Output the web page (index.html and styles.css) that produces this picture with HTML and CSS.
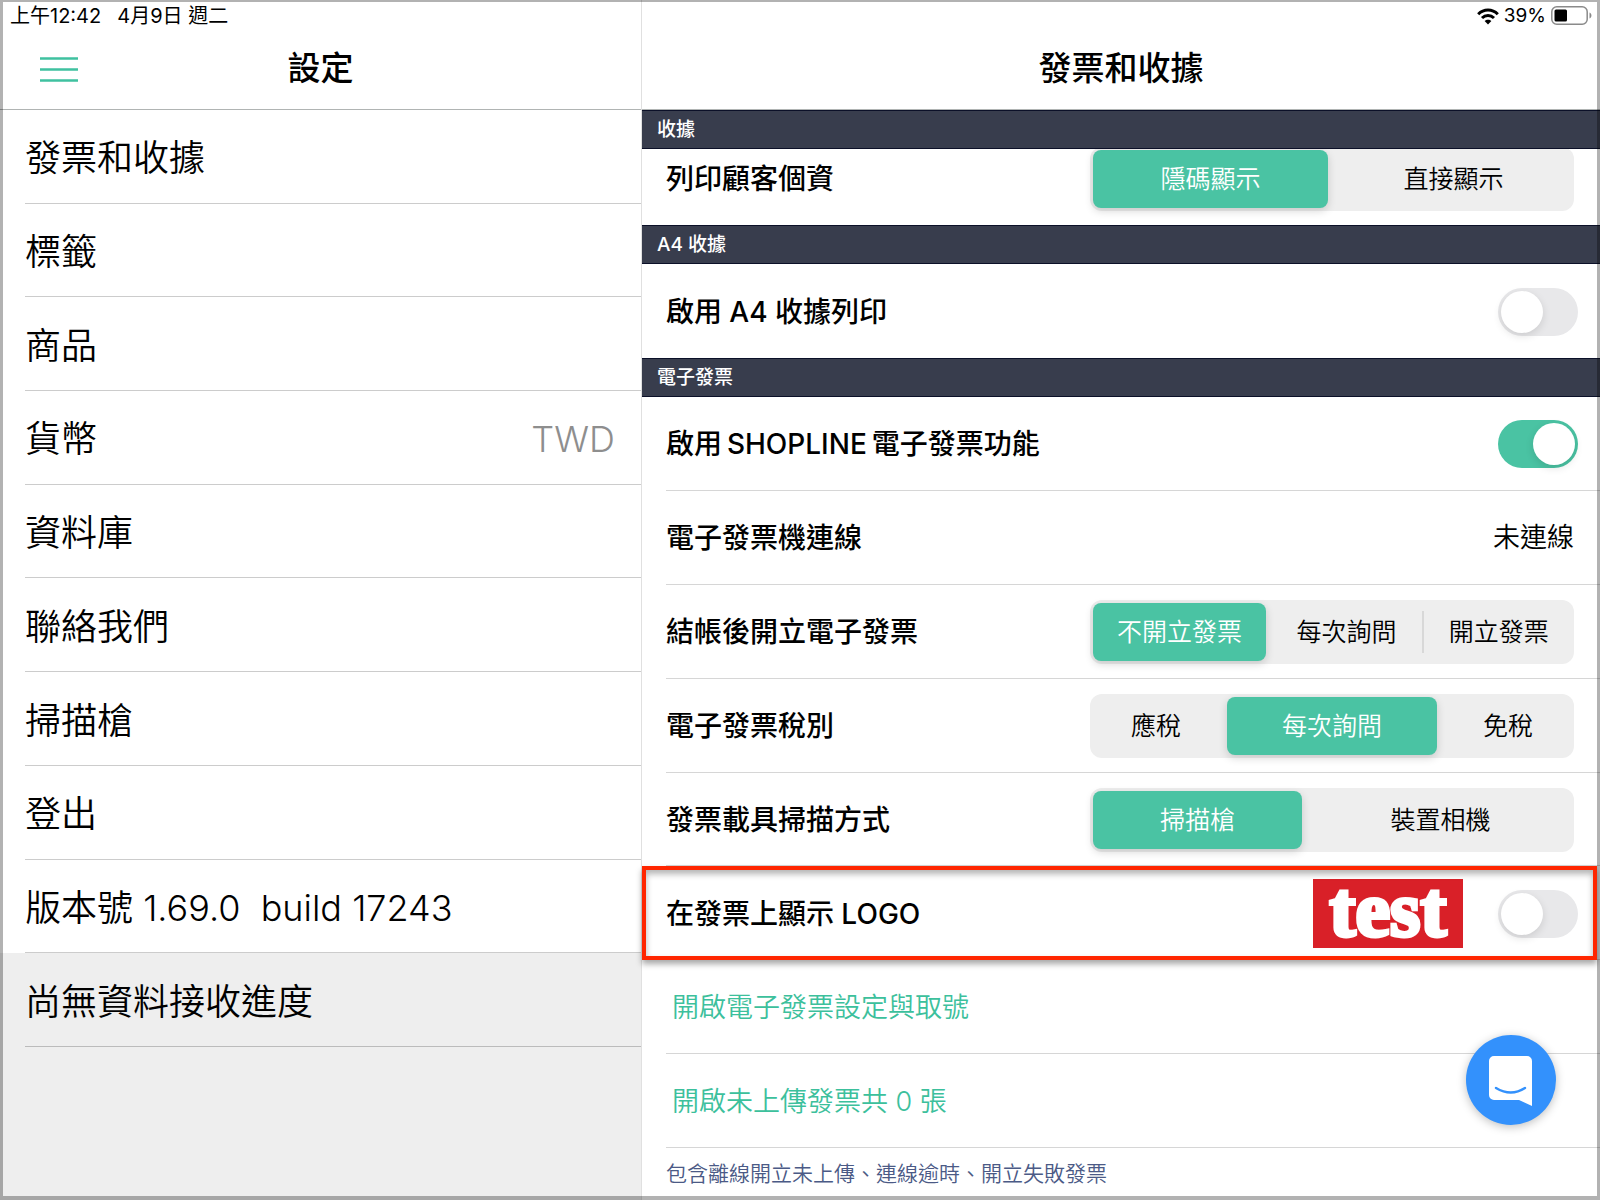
FILE: index.html
```html
<!DOCTYPE html>
<html lang="zh-Hant">
<head>
  <meta charset="UTF-8" />
  <meta name="viewport" content="width=device-width, initial-scale=1.0" />
  <title>設定 - 發票和收據</title>
  <link rel="stylesheet" href="styles.css">
</head>
<body>

  <div class="app">
    <nav class="sidebar">
      <header class="header">
        <div class="status">
          <span>上午12:42</span>
          <span>4月9日 週二</span>
        </div>
        <div class="title-bar">
          <button class="menu-btn" aria-label="選單">
            <svg width="38" height="26" viewBox="0 0 38 26"><path d="M0 1.5h38M0 12.5h38M0 23.5h38" stroke="#3fc1a0" stroke-width="2.6" /></svg>
          </button>
          <h1>設定</h1>
        </div>
      </header>

      <ul class="menu">
        <li><a href="#">發票和收據</a></li>
        <li><a href="#">標籤</a></li>
        <li><a href="#">商品</a></li>
        <li><a href="#">貨幣 <span class="currency">TWD</span></a></li>
        <li><a href="#">資料庫</a></li>
        <li><a href="#">聯絡我們</a></li>
        <li><a href="#">掃描槍</a></li>
        <li><a href="#">登出</a></li>
        <li><span class="version">版本號 1.69.0 &nbsp;build 17243</span></li>
        <li class="progress"><span>尚無資料接收進度</span></li>
      </ul>
    </nav>

    <main class="content">
      <header class="header">
        <div class="status status-right">
          <svg width="22" height="17" viewBox="0 0 22 17">
            <g fill="none" stroke="#000" stroke-width="3">
              <path d="M1.2 6.2C6.8 .6 15.2 .6 20.8 6.2" />
              <path d="M5 10C8.400 6.600 13.600 6.600 17 10" />
            </g>
            <path d="M11 16.500L7.600 13C9.500 11.200 12.500 11.200 14.400 13z" />
          </svg>
          <span>39%</span>
          <svg width="42" height="20" viewBox="0 0 42 20">
            <rect x=".8" y=".8" width="35.400" height="17.400" rx="5" fill="#fff" stroke="#8a8a8a" stroke-width="1.500" />
            <rect x="3.500" y="3.500" width="12.500" height="12" rx="1.500" />
            <path d="M38.500 6.500c2.600 1 2.600 5 0 6z" fill="#8a8a8a" />
          </svg>
        </div>
        <div class="title-bar">
          <h1>發票和收據</h1>
        </div>
      </header>

      <h2 class="section">收據</h2>
      <div class="row scrolled">
        <span class="label" id="customer">列印顧客個資</span>
        <div class="segmented seg-customer" role="radiogroup" aria-labelledby="customer">
          <label><input type="radio" name="customer" checked><span>隱碼顯示</span></label>
          <label><input type="radio" name="customer"><span>直接顯示</span></label>
        </div>
      </div>

      <h2 class="section">A4 收據</h2>
      <div class="row">
        <label class="label" for="a4">啟用 A4 收據列印</label>
        <input class="switch" type="checkbox" id="a4">
      </div>

      <h2 class="section">電子發票</h2>
      <div class="rows">
        <div class="row">
          <label class="label" for="einvoice">啟用<span class="brand">SHOPLINE</span>電子發票功能</label>
          <input class="switch" type="checkbox" id="einvoice" checked>
        </div>
        <div class="row">
          <span class="label">電子發票機連線</span>
          <span class="value">未連線</span>
        </div>
        <div class="row">
          <span class="label" id="checkout">結帳後開立電子發票</span>
          <div class="segmented seg-checkout" role="radiogroup" aria-labelledby="checkout">
            <label><input type="radio" name="checkout" checked><span>不開立發票</span></label>
            <label><input type="radio" name="checkout"><span>每次詢問</span></label>
            <label class="divided"><input type="radio" name="checkout"><span>開立發票</span></label>
          </div>
        </div>
        <div class="row">
          <span class="label" id="tax">電子發票稅別</span>
          <div class="segmented seg-tax" role="radiogroup" aria-labelledby="tax">
            <label><input type="radio" name="tax"><span>應稅</span></label>
            <label><input type="radio" name="tax" checked><span>每次詢問</span></label>
            <label><input type="radio" name="tax"><span>免稅</span></label>
          </div>
        </div>
        <div class="row">
          <span class="label" id="scan">發票載具掃描方式</span>
          <div class="segmented seg-scan" role="radiogroup" aria-labelledby="scan">
            <label><input type="radio" name="scan" checked><span>掃描槍</span></label>
            <label><input type="radio" name="scan"><span>裝置相機</span></label>
          </div>
        </div>
        <div class="row highlight">
          <label class="label" for="logo">在發票上顯示 LOGO</label>
          <span class="logo">test</span>
          <input class="switch" type="checkbox" id="logo">
        </div>
        <div class="row">
          <a class="link" href="#">開啟電子發票設定與取號</a>
        </div>
        <div class="row">
          <a class="link" href="#">開啟未上傳發票共 0 張</a>
        </div>
      </div>
      <p class="note">包含離線開立未上傳、連線逾時、開立失敗發票</p>
    </main>
  </div>

  <button class="chat" aria-label="聊天">
    <svg width="90" height="90" viewBox="0 0 90 90">
      <path d="M28 21h33a5 5 0 0 1 5 5v45l-13-6H28a5 5 0 0 1-5-5V26a5 5 0 0 1 5-5z" fill="#fff" />
      <path d="M30 53q15 9 29 0" fill="none" stroke="#3391fc" stroke-width="2.500" stroke-linecap="round" />
    </svg>
  </button>

</body>
</html>
```

FILE: styles.css
```css
* {
  box-sizing: border-box;
}

body {
  margin: 0;
  background: #fff;
  color: #000;
  font-family: Inter, "Noto Sans CJK TC", sans-serif;
}

/* window frame */
body::after {
  content: "";
  position: fixed;
  inset: 0;
  border: 3px solid rgba(0, 0, 0, 0.3);
  border-top-width: 2px;
  border-bottom-width: 4px;
  pointer-events: none;
  z-index: 10;
}

h1, h2, p, ul {
  margin: 0;
  padding: 0;
}

a {
  color: inherit;
  text-decoration: none;
}

.app {
  display: grid;
  grid-template-columns: 67fr 100fr;
  min-height: 100vh;
}

.sidebar, .content {
  display: flex;
  flex-direction: column;
  min-width: 0;
}

.sidebar {
  background: #eee;
  border-right: 1px solid #e0e0e0;
  padding-bottom: 153px;
}

/* header */
.header {
  height: 110px;
  background: #fff;
  border-bottom: 1px solid #b0b4b3;
}

.status {
  display: flex;
  align-items: center;
  gap: 16px;
  height: 30px;
  padding: 2px 7px 0 10px;
  font-size: 20px;
  line-height: 28px;
}

.status-right {
  justify-content: flex-end;
  gap: 5px;
  font-size: 19px;
}

.title-bar {
  position: relative;
  display: flex;
  align-items: center;
  justify-content: center;
  height: 76px;
}

.title-bar h1 {
  font-size: 33px;
  font-weight: 500;
  line-height: 44px;
}

.menu-btn {
  position: absolute;
  left: 40px;
  display: flex;
  padding: 4px 0 0;
  border: none;
  background: none;
}

/* left menu */
.menu {
  flex: 1;
  display: grid;
  grid-template-rows: repeat(10, 1fr);
  list-style: none;
  font-size: 36px;
  font-weight: 350;
  line-height: 48px;
}

.menu li {
  display: flex;
  padding-left: 25px;
  background: #fff;
}

.menu a, .menu li > span {
  flex: 1;
  display: flex;
  align-items: center;
  justify-content: space-between;
  padding: 4px 26px 0 0;
  border-bottom: 1px solid #ccc;
}

.menu .progress {
  background: #eee;
}

.menu .progress span {
  border-color: #bbb;
}

.currency {
  color: #8e8e8e;
}

/* right side */
.section {
  position: relative;
  z-index: 1;
  height: 39px;
  padding-left: 15px;
  background: #383d4d;
  border-top: 1px solid #0b1028;
  border-bottom: 1px solid #0b1028;
  color: #fff;
  font-size: 19px;
  font-weight: 500;
  line-height: 38px;
}

.row {
  position: relative;
  display: flex;
  align-items: center;
  min-height: 94px;
  padding: 2px 26px 0 24px;
}

.scrolled {
  margin-top: -18px;
}

.rows {
  flex: 1;
  display: grid;
  grid-template-rows: repeat(8, 1fr);
  padding-left: 24px;
}

.rows .row {
  min-height: 0;
  padding-left: 0;
  border-bottom: 1px solid #d6d6d6;
}

.label {
  flex: 1;
  font-size: 28px;
  font-weight: 500;
  line-height: 40px;
}

.brand {
  margin: 0 5px;
}

.value {
  font-size: 27px;
  font-weight: 350;
  line-height: 40px;
}

.link {
  padding-left: 6px;
  color: #3cc09c;
  font-size: 27px;
  font-weight: 350;
  line-height: 40px;
}

.note {
  height: 52px;
  padding-left: 24px;
  color: #4b5a86;
  font-size: 21px;
  font-weight: 350;
  line-height: 52px;
}

/* segmented control */
.segmented {
  display: grid;
  column-gap: 8px;
  width: 484px;
  height: 64px;
  padding: 3px;
  border-radius: 12px;
  background: #eee;
  font-size: 25px;
  font-weight: 350;
}

.seg-customer { grid-template-columns: 1fr 1fr; }
.seg-checkout { grid-template-columns: 6fr 5fr 5fr; }
.seg-tax { grid-template-columns: 3fr 5fr 3fr; }
.seg-scan { grid-template-columns: 4fr 5fr; }

.segmented label {
  position: relative;
  display: flex;
}

.segmented input {
  position: absolute;
  opacity: 0;
  margin: 0;
}

.segmented span {
  flex: 1;
  display: flex;
  align-items: center;
  justify-content: center;
  padding-bottom: 4px;
  border-radius: 8px;
}

.segmented input:checked + span {
  background: #4ac3a3;
  color: #fff;
  box-shadow: 0 3px 8px rgba(0, 0, 0, 0.16);
}

.divided::before {
  content: "";
  position: absolute;
  left: -5px;
  top: 8px;
  bottom: 8px;
  width: 2px;
  background: #d8d8d8;
}

/* on/off switch */
.switch {
  appearance: none;
  width: 80px;
  height: 48px;
  margin: 0 -4px 0 0;
  padding: 3px;
  border-radius: 24px;
  background: #e8e8ea;
}

.switch::before {
  content: "";
  display: block;
  width: 42px;
  height: 42px;
  border-radius: 50%;
  background: #fff;
  box-shadow: 0 3px 8px rgba(0, 0, 0, 0.12);
}

.switch:checked {
  background: #4ac3a3;
}

.switch:checked::before {
  margin-left: auto;
}

/* highlighted row */
.highlight::after {
  content: "";
  position: absolute;
  inset: 0 3px -1px -24px;
  border: 4px solid #ff2600;
  box-shadow: 0 4px 6px rgba(0, 0, 0, 0.35), inset 0 4px 6px rgba(0, 0, 0, 0.3);
  pointer-events: none;
}

.logo {
  width: 150px;
  height: 69px;
  margin-right: 35px;
  background: #d92028;
  color: #fff;
  font-family: "Liberation Serif", serif;
  font-size: 78px;
  font-weight: 700;
  line-height: 62px;
  text-align: center;
  -webkit-text-stroke: 4px #fff;
}

.chat {
  position: fixed;
  right: 44px;
  bottom: 75px;
  width: 90px;
  height: 90px;
  padding: 0;
  border: none;
  border-radius: 50%;
  background: #3391fc;
  box-shadow: 0 2px 10px rgba(0, 0, 0, 0.25);
}
```
